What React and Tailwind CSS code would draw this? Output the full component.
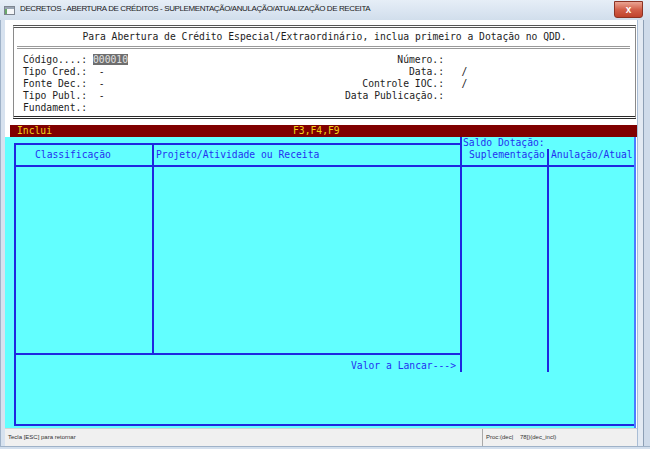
const mono = { fontFamily: '"DejaVu Sans Mono", monospace' };

const campos = [
  { esq: "Código....: ", cod: "000010", dir: "Número.:", val: "" },
  { esq: "Tipo Cred.:  -", dir: "Data.:", val: "   /" },
  { esq: "Fonte Dec.:  -", dir: "Controle IOC.:", val: "   /" },
  { esq: "Tipo Publ.:  -", dir: "Data Publicação.:", val: "" },
  { esq: "Fundament.:", dir: "", val: "" },
];

const IconeJanela = () => (
  <svg width="11" height="9" viewBox="0 0 11 9">
    <rect x="0.5" y="0.5" width="10" height="8" fill="#f4f6f8" stroke="#7d8590" />
    <rect x="1" y="1" width="9" height="2" fill="#9aa6b4" />
    <rect x="1" y="3" width="2" height="5" fill="#6aa86a" />
  </svg>
);

export default function App() {
  return (
    <div
      className="flex h-[449px] w-[650px] flex-col overflow-hidden bg-[#d3dfed]"
      style={{ fontFamily: '"Liberation Sans", Arial, sans-serif' }}
    >
      {/* barra de título */}
      <div className="flex h-[20px] items-start bg-gradient-to-b from-[#e6eef7] to-[#d1deec]">
        <div className="ml-[4px] mt-[6px]">
          <IconeJanela />
        </div>
        <span className="ml-[5px] mt-[4px] whitespace-nowrap text-[8px] leading-[10px] tracking-[-0.4px] text-[#1b1b1b]">
          DECRETOS - ABERTURA DE CRÉDITOS - SUPLEMENTAÇÃO/ANULAÇÃO/ATUALIZAÇÃO DE RECEITA
        </span>
        <button
          type="button"
          className="ml-auto mr-[7px] mt-[1px] flex h-[17px] w-[29px] items-center justify-center rounded-b-[3px] border border-[#8b3324] bg-gradient-to-b from-[#e9a493] via-[#d2604a] to-[#c0432c] text-[10px] font-bold leading-none text-white"
        >
          x
        </button>
      </div>

      <div className="flex h-[426px]">
        <div className="w-[5px] border-l border-[#9fb2c8] bg-[#d7e2ef]" />

        {/* área cliente */}
        <div className="flex w-[632px] flex-col bg-white">
          {/* painel superior */}
          <div className="h-[105px] pl-[8px] pt-[5px]">
            <div
              className="h-[94px] w-[623px] border-x border-b-[3px] border-t-[3px] border-x-[#8a8a8a] border-b-[#2a2a2a] border-t-[#555] border-double text-[9.7px] leading-[12px] text-[#1c1c1c]"
              style={mono}
            >
              <p className="mt-[3px] text-center whitespace-pre">
                Para Abertura de Crédito Especial/Extraordinário, inclua primeiro a Dotação no QDD.
              </p>
              <div className="ml-[3px] mr-[5px] mt-[3px] border-t-[3px] border-double border-[#9a9a9a]" />
              <div className="mt-[5px] grid grid-cols-[322px_99px_1fr] pl-[9px]">
                {campos.map((c, i) => (
                  <div key={i} className="contents">
                    <span className="whitespace-pre">
                      {c.esq}
                      {c.cod && (
                        <span className="bg-[#6e6e6e] text-[#e2e2e2]">{c.cod}</span>
                      )}
                    </span>
                    <span className="whitespace-pre text-right">{c.dir}</span>
                    <span className="whitespace-pre">{c.val}</span>
                  </div>
                ))}
              </div>
            </div>
          </div>

          {/* barra de status vermelha */}
          <div
            className="ml-[5px] flex h-[12px] items-center bg-[#800000] text-[9.7px] leading-[12px] text-[#f2d21a]"
            style={mono}
          >
            <span className="ml-[7px] w-[276px]">Inclui</span>
            <span>F3,F4,F9</span>
          </div>

          {/* área de digitação */}
          <div
            className="flex h-[291px] w-[631px] flex-col border-r-2 border-[#4a7cff] bg-[#62ffff] pb-[2px] pl-[9px] text-[9.7px] leading-[12px] text-[#2530f0]"
            style={mono}
          >
            <div className="flex h-[30px] border-b-2 border-[#1f28e0]">
              <div className="mt-[6px] flex w-[446px] border-l-2 border-t-2 border-[#1f28e0] leading-[20px]">
                <div className="w-[138px] border-r-2 border-[#1f28e0] pl-[19px]">Classificação</div>
                <div className="flex-1 pl-[2px]">Projeto/Atividade ou Receita</div>
              </div>
              <div className="flex flex-1 flex-col border-l-2 border-[#1f28e0]">
                <div className="h-[12px] pl-[1px]">Saldo Dotação:</div>
                <div className="flex flex-1">
                  <div className="w-[87px] border-r-2 border-[#1f28e0] pl-[7px]">Suplementação</div>
                  <div className="flex-1 pl-[2px]">Anulação/Atual</div>
                </div>
              </div>
            </div>

            <div className="flex h-[186px]">
              <div className="w-[140px] border-x-2 border-[#1f28e0]" />
              <div className="w-[308px] border-r-2 border-[#1f28e0]" />
              <div className="w-[87px] border-r-2 border-[#1f28e0]" />
              <div className="flex-1" />
            </div>

            <div className="flex h-[19px]">
              <div className="w-[446px] whitespace-pre border-l-2 border-t-2 border-[#1f28e0] pr-[4px] pt-[5px] text-right">
                Valor a Lancar---&gt;
              </div>
              <div className="w-[89px] border-x-2 border-[#1f28e0]" />
              <div className="flex-1" />
            </div>

            <div className="flex-1 border-b-2 border-l-2 border-[#1f28e0]" />
          </div>

          {/* barra de status */}
          <div className="flex h-[18px] border-t border-[#d2d2d2] bg-[#f0f0f0] text-[6px] leading-[17px] text-[#333]">
            <span className="w-[477px] pl-[3px]">Tecla [ESC] para retornar</span>
            <span className="border-l border-[#a9a9a9] pl-[3px] whitespace-pre">Proc:(dec|    78])(dec_incl)</span>
          </div>
        </div>

        <div className="flex w-[13px]">
          <div className="w-[6px] border-l border-[#a9bdd5] bg-[#e3eaf3]" />
          <div className="w-[1px] bg-[#8d9fb5]" />
          <div className="flex-1 bg-[#cfdbea]" />
        </div>
      </div>

      <div className="h-[3px] border-t border-[#9fb2c8] bg-[#d3dfed]" />
    </div>
  );
}
